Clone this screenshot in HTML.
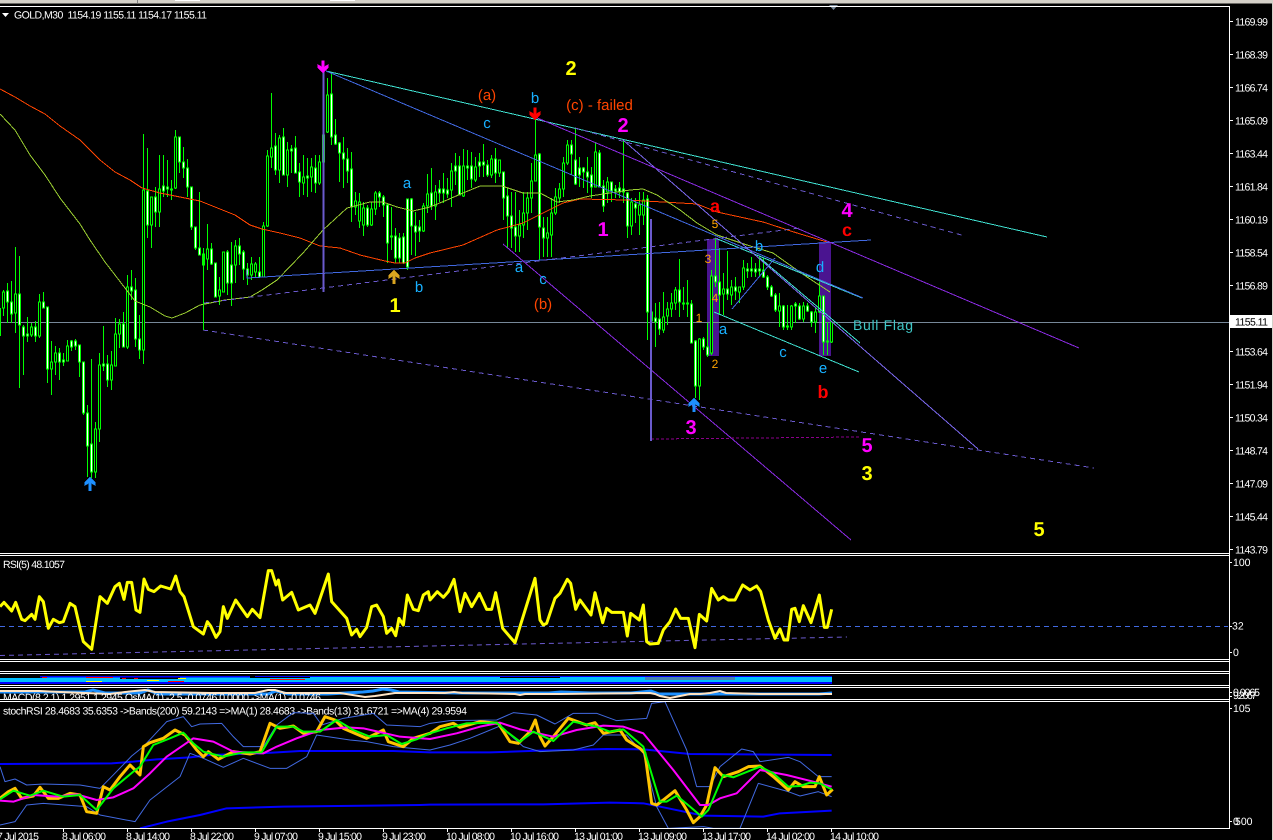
<!DOCTYPE html>
<html><head><meta charset="utf-8"><title>GOLD,M30</title>
<style>
html,body{margin:0;padding:0;background:#000;width:1273px;height:840px;overflow:hidden}
svg{display:block;position:absolute;left:0;top:0}
text{font-family:"Liberation Sans",sans-serif;text-rendering:geometricPrecision}
.t{font-size:10.500px;fill:#fff}
.ab{font-size:15px;fill:#18b0ff;text-anchor:middle}
.or{font-size:15px;fill:#ff4500;text-anchor:middle}
.sm{font-size:12px;fill:#ffa500;text-anchor:middle}
.big{font-size:20px;font-weight:bold;text-anchor:middle}
.re{font-size:18px;font-weight:bold;fill:#f00;text-anchor:middle}
.l{fill:none;vector-effect:non-scaling-stroke;stroke-linejoin:round}
</style></head><body>
<svg width="1273" height="840" viewBox="0 0 1273 840" xmlns="http://www.w3.org/2000/svg">
<defs><clipPath id="c6"><rect x="0" y="702" width="1229" height="126"/></clipPath><clipPath id="c5"><rect x="0" y="688" width="1229" height="11"/></clipPath></defs>
<rect width="1273" height="840" fill="#000"/>
<rect width="1273" height="3.5" fill="#d4d0c8"/><rect x="1272" width="1" height="840" fill="#d4d0c8"/>
<rect x="137" y="0" width="1" height="3" fill="#808080"/><rect x="175" width="25" height="1" fill="#fff"/><rect x="330" width="25" height="1" fill="#fff"/>
<!-- purple rectangles -->
<rect x="707" y="239" width="12" height="117" fill="#4a1490"/>
<rect x="819" y="242" width="12" height="114" fill="#4a1490"/>
<!-- price line -->
<path d="M0 322.5H1229" stroke="#778899" fill="none" shape-rendering="crispEdges"/>
<!-- candles -->
<g stroke="#0f0" shape-rendering="crispEdges">
<path fill="none" d="M.5 308V336M3.5 290V316M7.5 283V323M11.5 281V323M15.5 247V333M19.5 256V388M23.5 325V375M27.5 317V342M31.5 323V337M35.5 321V342M39.5 294V338M43.5 292V308M47.5 307V383M51.5 341V395M55.5 346V375M59.5 348V380M63.5 353V366M67.5 340V361M71.5 340V351M75.5 339V350M79.5 345V377M83.5 362V415M87.5 405V477M91.5 359V478M95.5 422V478M99.5 353V442M103.5 326V371M107.5 355V387M111.5 351V390M115.5 318V366M119.5 319V348M123.5 312V347M127.5 275V349M131.5 270V300M135.5 278V347M139.5 315V359M143.5 134V364M147.5 148V238M151.5 197V248M155.5 187V227M159.5 155V227M163.5 155V197M167.5 160V197M171.5 180V200M175.5 130V189M179.5 137V173M183.5 147V178M187.5 159V197M191.5 187V230M195.5 227V250M199.5 192V255M203.5 248V330M207.5 224V270M211.5 243V265M215.5 263V297M219.5 277V305M223.5 252V292M227.5 250V295M231.5 242V306M235.5 240V283M239.5 238V265M243.5 250V280M247.5 263V285M251.5 257V280M255.5 262V278M259.5 257V278M263.5 222V277M267.5 150V227M271.5 93V168M275.5 133V175M279.5 135V183M283.5 128V175M287.5 142V187M291.5 145V173M295.5 136V173M299.5 163V197M303.5 155V195M307.5 158V197M311.5 158V192M315.5 155V193M319.5 155V185M323.5 130V165M327.5 78V133M331.5 72V145M335.5 119V145M339.5 142V182M343.5 137V188M347.5 148V183M351.5 152V222M355.5 192V215M359.5 193V228M363.5 202V236M367.5 205V227M371.5 202V226M375.5 191V215M379.5 191V207M383.5 195V217M387.5 203V263M391.5 207V250M395.5 228V263M399.5 233V263M403.5 233V264M407.5 199V270M411.5 198V255M415.5 212V256M419.5 220V242M423.5 203V232M427.5 174V213M431.5 168V210M435.5 185V220M439.5 180V202M443.5 173V203M447.5 178V198M451.5 163V207M455.5 153V185M459.5 156V195M463.5 149V197M467.5 150V180M471.5 152V188M475.5 157V182M479.5 153V177M483.5 144V177M487.5 160V177M491.5 155V178M495.5 148V183M499.5 160V177M503.5 172V220M507.5 188V248M511.5 192V248M515.5 192V252M519.5 210V252M523.5 192V238M527.5 192V230M531.5 163V213M535.5 117V181M539.5 153V260M543.5 217V257M547.5 217V257M551.5 198V257M555.5 188V215M559.5 183V203M563.5 157V197M567.5 140V165M571.5 140V175M575.5 129V185M579.5 157V187M583.5 167V188M587.5 157V193M591.5 167V198M595.5 142V187M599.5 150V187M603.5 180V212M607.5 177V203M611.5 182V202M615.5 185V198M619.5 182V198M623.5 140V203M627.5 192V238M631.5 198V235M635.5 198V223M639.5 192V235M643.5 192V225M647.5 195V340M651.5 312V350M655.5 303V347M659.5 302V335M663.5 292V333M667.5 302V325M671.5 293V317M675.5 287V310M679.5 259V317M683.5 287V310M687.5 280V317M691.5 300V343M695.5 340V398M699.5 338V400M703.5 337V350M707.5 323V357M711.5 270V355M715.5 238V287M719.5 248V315M723.5 273V315M727.5 251V300M731.5 280V305M735.5 277V300M739.5 287V303M743.5 260V290M747.5 263V278M751.5 257V277M755.5 263V277M759.5 257V277M763.5 258V278M767.5 275V290M771.5 285V297M775.5 293V312M779.5 293V327M783.5 305V330M787.5 305V330M791.5 305V330M795.5 302V323M799.5 303V320M803.5 302V322M807.5 303V312M811.5 311V327M815.5 307V333M819.5 282V313M823.5 296V355M827.5 322V355M831.5 322V343"/>
<path fill="#fff" d="M6.5 291h2v11h-2zM10.5 302h2v12h-2zM18.5 294h2v31h-2zM22.5 327h2v9h-2zM26.5 334h2v2h-2zM34.5 327h2v9h-2zM42.5 302h2v6h-2zM46.5 307h2v62h-2zM58.5 353h2v9h-2zM62.5 360h2v2h-2zM70.5 341h2v6h-2zM74.5 341h2v5h-2zM78.5 345h2v17h-2zM82.5 362h2v51h-2zM86.5 413h2v33h-2zM90.5 444h2v28h-2zM102.5 364h2v2h-2zM106.5 364h2v16h-2zM122.5 324h2v23h-2zM130.5 287h2v4h-2zM134.5 290h2v49h-2zM138.5 339h2v11h-2zM146.5 191h2v34h-2zM154.5 197h2v15h-2zM162.5 186h2v5h-2zM166.5 187h2v2h-2zM170.5 189h2v1h-2zM178.5 137h2v25h-2zM182.5 162h2v6h-2zM186.5 168h2v19h-2zM190.5 187h2v40h-2zM194.5 227h2v21h-2zM198.5 248h2v7h-2zM202.5 254h2v11h-2zM210.5 249h2v15h-2zM214.5 263h2v34h-2zM226.5 252h2v31h-2zM230.5 265h2v18h-2zM238.5 246h2v8h-2zM242.5 252h2v17h-2zM246.5 269h2v6h-2zM258.5 272h2v5h-2zM274.5 146h2v24h-2zM282.5 137h2v38h-2zM290.5 149h2v2h-2zM294.5 148h2v25h-2zM298.5 172h2v10h-2zM306.5 176h2v2h-2zM314.5 168h2v15h-2zM330.5 94h2v43h-2zM334.5 135h2v9h-2zM338.5 143h2v10h-2zM342.5 153h2v6h-2zM346.5 159h2v12h-2zM350.5 169h2v38h-2zM366.5 208h2v17h-2zM378.5 193h2v4h-2zM382.5 197h2v8h-2zM386.5 205h2v38h-2zM390.5 236h2v1h-2zM394.5 236h2v22h-2zM398.5 238h2v20h-2zM402.5 237h2v26h-2zM406.5 199h2v68h-2zM410.5 199h2v27h-2zM414.5 226h2v6h-2zM418.5 227h2v4h-2zM430.5 193h2v13h-2zM438.5 189h2v4h-2zM442.5 189h2v4h-2zM446.5 190h2v4h-2zM454.5 166h2v5h-2zM458.5 166h2v29h-2zM466.5 166h2v2h-2zM470.5 166h2v13h-2zM478.5 162h2v4h-2zM482.5 162h2v3h-2zM486.5 165h2v10h-2zM494.5 159h2v14h-2zM502.5 172h2v26h-2zM506.5 196h2v20h-2zM510.5 216h2v12h-2zM514.5 227h2v9h-2zM538.5 154h2v73h-2zM542.5 228h2v10h-2zM570.5 145h2v9h-2zM574.5 160h2v24h-2zM578.5 168h2v7h-2zM582.5 168h2v4h-2zM586.5 172h2v5h-2zM590.5 175h2v12h-2zM598.5 153h2v34h-2zM602.5 186h2v20h-2zM610.5 182h2v9h-2zM614.5 189h2v2h-2zM618.5 188h2v4h-2zM622.5 189h2v3h-2zM626.5 193h2v33h-2zM634.5 204h2v4h-2zM646.5 199h2v113h-2zM650.5 312h2v9h-2zM654.5 318h2v4h-2zM658.5 319h2v10h-2zM678.5 290h2v12h-2zM682.5 303h2v1h-2zM686.5 303h2v1h-2zM690.5 304h2v39h-2zM694.5 341h2v45h-2zM702.5 339h2v8h-2zM706.5 347h2v8h-2zM714.5 276h2v6h-2zM718.5 282h2v13h-2zM726.5 289h2v5h-2zM734.5 287h2v4h-2zM746.5 269h2v2h-2zM750.5 269h2v2h-2zM754.5 269h2v3h-2zM758.5 269h2v2h-2zM762.5 270h2v7h-2zM766.5 277h2v10h-2zM770.5 287h2v9h-2zM774.5 295h2v15h-2zM782.5 306h2v21h-2zM786.5 326h2v1h-2zM794.5 304h2v2h-2zM798.5 306h2v13h-2zM806.5 306h2v5h-2zM810.5 312h2v10h-2zM822.5 296h2v46h-2zM826.5 341h2v1h-2z"/>
<path fill="#000" d="M2.5 292h2v16h-2zM14.5 294h2v19h-2zM30.5 327h2v8h-2zM38.5 302h2v34h-2zM50.5 362h2v7h-2zM54.5 353h2v9h-2zM66.5 346h2v15h-2zM94.5 429h2v43h-2zM98.5 365h2v64h-2zM110.5 365h2v15h-2zM114.5 334h2v32h-2zM118.5 324h2v10h-2zM126.5 287h2v60h-2zM142.5 190h2v160h-2zM150.5 197h2v28h-2zM158.5 189h2v23h-2zM174.5 137h2v51h-2zM206.5 249h2v10h-2zM218.5 290h2v6h-2zM222.5 252h2v40h-2zM234.5 246h2v19h-2zM250.5 264h2v11h-2zM254.5 264h2v8h-2zM262.5 226h2v51h-2zM266.5 156h2v70h-2zM270.5 148h2v9h-2zM278.5 138h2v32h-2zM286.5 150h2v25h-2zM302.5 177h2v6h-2zM310.5 167h2v10h-2zM318.5 162h2v21h-2zM322.5 135h2v27h-2zM326.5 95h2v37h-2zM354.5 201h2v6h-2zM358.5 202h2v19h-2zM362.5 208h2v17h-2zM370.5 209h2v16h-2zM374.5 193h2v16h-2zM422.5 206h2v25h-2zM426.5 194h2v12h-2zM434.5 192h2v14h-2zM450.5 171h2v19h-2zM462.5 166h2v30h-2zM474.5 167h2v13h-2zM490.5 159h2v16h-2zM498.5 160h2v13h-2zM518.5 225h2v11h-2zM522.5 213h2v12h-2zM526.5 198h2v15h-2zM530.5 181h2v17h-2zM534.5 155h2v26h-2zM546.5 233h2v5h-2zM550.5 213h2v22h-2zM554.5 197h2v16h-2zM558.5 189h2v9h-2zM562.5 163h2v26h-2zM566.5 145h2v18h-2zM594.5 152h2v35h-2zM606.5 182h2v10h-2zM630.5 202h2v24h-2zM638.5 205h2v10h-2zM642.5 200h2v15h-2zM662.5 317h2v13h-2zM666.5 309h2v7h-2zM670.5 303h2v6h-2zM674.5 290h2v13h-2zM698.5 339h2v47h-2zM710.5 276h2v77h-2zM722.5 289h2v5h-2zM730.5 287h2v8h-2zM738.5 287h2v5h-2zM742.5 268h2v19h-2zM778.5 306h2v5h-2zM790.5 306h2v21h-2zM802.5 306h2v13h-2zM814.5 312h2v10h-2zM818.5 296h2v16h-2zM830.5 322h2v20h-2z"/>
</g>
<!-- MAs -->
<g shape-rendering="crispEdges" fill="none">
<polyline stroke="#ff4500" points="0,89 15,97 30,106 45,114 60,126 80,140 100,160 115,172 130,180 142,188 160,193 180,197 200,201 215,207 235,215 250,225 262,229 280,233 300,238 320,246 340,248 360,255 385,261 395,263 405,263 415,258 430,253 463,245 497,230 523,223 543,213 563,203 580,199 627,200 663,202 697,204 717,212 763,222 797,233 827,242"/>
<polyline stroke="#9acd32" points="0,114 15,130 30,155 45,175 60,198 80,224 90,240 105,262 125,288 135,301 150,307 165,316 172,318 185,313 200,305 225,300 250,297 262,290 277,280 303,253 323,230 347,208 370,202 383,202 397,207 413,211 430,207 447,200 463,193 480,186 502,186 523,193 540,193 557,202 573,200 590,196 630,190 643,189 657,195 680,210 697,223 717,235 747,245 773,253 787,263 807,277 830,292"/>
<!-- trend lines -->
<path stroke="#40e0d0" d="M326 71L1047 237M714 312L859 372M715 238L862 298M760 258L860 343"/>
<path stroke="#4169e1" d="M326 71L863 298M247 270V278L871 240M732 309L775 258"/>
<path stroke="#7b68ee" d="M623 140L978 449"/>
<path stroke="#8a2be2" d="M535 117L1079 348M503 244L851 540"/>
<path stroke="#6a5acd" stroke-dasharray="5 4" d="M575 128L965 236M204 303L800 228M203 330L1094 468"/>
<path stroke="#0f0" d="M203.5 248V330"/>
<path stroke="#8b008b" stroke-dasharray="3 2" d="M651 439L860 437"/>
<path stroke="#6a5acd" stroke-width="2" d="M323.5 70V292M651 219V441"/>
</g>
<!-- arrows -->
<g shape-rendering="crispEdges">
<path fill="#f0f" d="M323 73l5.5-5v-4l-4 2.5v-6h-3v6l-4-2.5v4z"/>
<path fill="#f00" d="M535 120l5.5-5v-4l-4 2.5v-6h-3v6l-4-2.5v4z"/>
<path fill="#1e90ff" d="M90 477l5.5 5v4l-4-2.5v7.5h-3v-7.5l-4 2.5v-4z"/>
<path fill="#daa520" d="M394 270l5.5 5v4l-4-2.5v7.5h-3v-7.5l-4 2.5v-4z"/>
<path fill="#1e90ff" d="M694 398l5.5 5v4l-4-2.5v7.5h-3v-7.5l-4 2.5v-4z"/>
</g>
<!-- labels -->
<text x="571" y="75" class="big" fill="#ff0">2</text>
<text x="487" y="100" class="or">(a)</text>
<text x="599.500" y="110" class="or">(c) - failed</text>
<text x="535" y="103" class="ab">b</text>
<text x="487" y="128" class="ab">c</text>
<text x="407" y="188" class="ab">a</text>
<text x="419" y="292" class="ab">b</text>
<text x="395" y="312" class="big" fill="#ff0">1</text>
<text x="519" y="272" class="ab">a</text>
<text x="543" y="284" class="ab">c</text>
<text x="543" y="309" class="or">(b)</text>
<text x="603" y="236" class="big" fill="#f0f">1</text>
<text x="623" y="132" class="big" fill="#f0f">2</text>
<text x="715" y="212" class="re">a</text>
<text x="715" y="228" class="sm">5</text>
<text x="708" y="263" class="sm">3</text>
<text x="715" y="302" class="sm">4</text>
<text x="699" y="322" class="sm">1</text>
<text x="715" y="368" class="sm">2</text>
<text x="759" y="251" class="ab">b</text>
<text x="820" y="272" class="ab">d</text>
<text x="723" y="334" class="ab">a</text>
<text x="783" y="357" class="ab">c</text>
<text x="823" y="373" class="ab">e</text>
<text x="823" y="398" class="re">b</text>
<text x="847" y="217" class="big" fill="#f0f">4</text>
<text x="847" y="236" class="re">c</text>
<text x="691" y="434" class="big" fill="#f0f">3</text>
<text x="867" y="452" class="big" fill="#f0f">5</text>
<text x="867" y="480" class="big" fill="#ff0">3</text>
<text x="1039" y="536" class="big" fill="#ff0">5</text>
<text x="853" y="330" font-size="14" fill="#40c8c8" textLength="60">Bull Flag</text>
<!-- headers -->
<path d="M2 13h7l-3.500 4z" fill="#fff"/>
<text x="14" y="18.500" class="t" textLength="193">GOLD,M30&#160;&#160;1154.19 1155.11 1154.17 1155.11</text>
<path d="M829 5h9l-4.500 5z" fill="#778899"/>
<text x="3" y="568" class="t" textLength="62">RSI(5) 48.1057</text>
<!-- RSI -->
<path d="M0 626.500H1228" stroke="#4169e1" stroke-dasharray="5 4" fill="none" shape-rendering="crispEdges"/>
<path d="M0 655.500L430 646L847 637" stroke="#6a5acd" stroke-dasharray="5 4" fill="none"/>
<g transform="translate(0,550) scale(.33333)"><polyline class="l" stroke="#ff0" stroke-width="3" points="0,170 12,157 35,183 47,157 65,208 75,212 95,193 105,208 118,140 130,155 145,235 160,208 178,218 190,215 210,160 225,170 240,235 250,275 275,298 300,140 322,160 345,110 358,100 372,148 382,97 395,97 408,180 420,187 432,87 445,118 462,125 482,108 512,117 527,78 540,125 552,140 580,230 610,252 622,215 632,228 648,262 660,245 670,170 682,205 707,150 742,200 757,178 780,203 805,62 815,62 828,105 835,90 848,150 875,127 895,180 930,165 945,190 985,72 995,155 1040,205 1055,255 1070,238 1080,260 1100,232 1115,170 1130,165 1150,200 1160,250 1175,235 1187,257 1197,205 1210,225 1222,135 1240,178 1255,182 1270,135 1285,125 1290,150 1312,125 1330,142 1345,125 1362,88 1380,185 1395,130 1415,170 1438,130 1460,178 1475,178 1487,128 1508,235 1545,278 1605,85 1620,210 1630,225 1640,220 1665,145 1680,130 1702,88 1712,100 1727,178 1740,150 1773,195 1785,128 1808,218 1820,175 1835,187 1870,187 1882,258 1892,190 1918,210 1930,165 1940,275 1950,282 1975,280 1990,240 2010,215 2027,177 2042,205 2065,205 2085,293 2098,193 2120,213 2135,115 2155,150 2170,140 2185,150 2205,150 2228,105 2250,120 2270,108 2282,125 2305,210 2325,265 2340,237 2352,270 2363,270 2375,178 2385,175 2398,215 2410,167 2433,218 2458,135 2473,232 2482,232 2495,178"/></g>
<!-- panel 4 band -->
<g shape-rendering="crispEdges">
<rect x="0" y="682" width="832" height="2" fill="#00f"/>
<rect x="0" y="677" width="832" height="5" fill="#00bfff"/>
<path fill="#000" d="M0 677h45v1h-45zM120 677h60v2h-60zM250 677h60v1h-60zM500 677h60v1h-60zM650 677h60v1h-60z"/>
<rect x="40" y="676" width="210" height="1.500" fill="#00f"/>
<rect x="255" y="676" width="577" height="1" fill="#00f"/>
<path fill="#f00" d="M42 677h5v1h-5zM86 677h27v1h-27zM122 678h4v1h-4zM134 678h4v1h-4zM168 681h16v1h-16zM270 679h35v1h-35z"/>
<path fill="#ff0" d="M86 681h16v1h-16zM147 680h12v1h-12zM178 678h8v1h-8zM690 679h8v1h-8z"/>
<rect x="645" y="677" width="90" height="3" fill="#4682b4"/>
</g>
<!-- panel 5 -->
<g clip-path="url(#c5)">
<polyline fill="none" stroke="#1e90ff" stroke-width="3" points="0,692 85,692 93,690 105,693 140,693 148,690 158,694 268,694 276,691 288,694 328,694 363,692 373,691 383,689 391,690 399,692 459,693 549,693 561,692 591,693 631,693 651,691 659,694 819,694 832,693"/>
<polyline fill="none" stroke="#ffe4c4" stroke-width="2" points="0,691 40,691 60,692 85,693 110,694 125,692 145,690 155,692 210,693 255,693 268,690 275,690 285,693 340,693 365,697 375,696 395,693 445,693 454,692 462,693 515,694 520,695 525,694 560,694 650,693 655,694 660,696 670,698 680,696 690,694 700,694 710,693 720,691 726,693 760,694 832,694"/>
<text x="3" y="701" class="t" textLength="318">MACD(8,2,1) 1.2951 1.2945  OsMA(1) -2.5 -0.0746 0.0000  ->MA(1) -0.0746</text>
</g>
<!-- stoch -->
<text x="3" y="714.500" class="t" textLength="464">stochRSI 28.4683 35.6353  ->Bands(200) 59.2143  =>MA(1) 28.4683  ->Bands(13) 31.6721  =>MA(4) 29.9594</text>
<g clip-path="url(#c6)"><g transform="translate(0,550) scale(.33333)">
<polyline class="l" stroke="#00f" stroke-width="2" points="0,642 335,640 400,635 470,628 570,622 630,615 780,610 900,603 1180,603 1290,607 1470,607 1620,602 1820,597 1930,598 2070,612 2495,615"/>
<polyline class="l" stroke="#00f" stroke-width="2" points="420,835 500,815 600,795 680,775 850,770 1260,765 1290,764 1630,763 1830,758 1930,760 1990,772 2110,797 2290,800 2340,790 2495,782"/>
<polyline class="l" stroke="#4169e1" stroke-width="1" points="0,650 15,695 45,687 80,705 130,702 240,705 300,715 330,685 395,618 430,590 500,515 550,500 575,530 600,522 665,520 700,560 730,590 790,590 830,525 880,488 940,490 965,525 1030,505 1120,490 1160,525 1260,530 1290,520 1350,512 1490,510 1540,488 1610,495 1665,522 1720,490 1790,490 1850,512 1940,505 1955,460 1995,455 2060,600 2090,710 2130,710 2160,650 2225,597 2260,605 2280,635 2365,622 2400,635 2455,680 2495,680"/>
<polyline class="l" stroke="#4169e1" stroke-width="1" points="0,825 45,815 80,765 130,760 260,770 300,795 405,815 450,750 540,680 570,610 610,625 670,652 730,625 810,655 860,655 920,620 950,555 1050,570 1100,575 1180,590 1290,600 1350,585 1410,565 1500,528 1570,590 1620,605 1720,600 1780,585 1810,555 1880,555 1930,610 1970,770 2005,835 2110,830 2140,835 2220,835 2275,700 2365,725 2400,738 2455,725 2495,740"/>
<polyline class="l" stroke="#ffc400" stroke-width="3" points="0,745 25,725 45,715 65,745 100,738 120,712 145,745 175,745 210,730 240,735 260,785 290,790 310,710 330,720 360,680 390,645 420,675 430,590 450,578 490,565 525,540 555,555 590,600 610,620 625,605 655,628 700,605 750,612 780,605 810,520 840,535 880,528 910,550 950,545 975,500 1005,510 1030,535 1100,565 1150,540 1165,575 1210,590 1240,565 1290,550 1320,530 1360,520 1380,532 1440,515 1495,520 1530,575 1555,580 1590,545 1606,510 1620,560 1635,588 1660,560 1705,505 1760,525 1785,518 1810,550 1860,540 1880,570 1920,595 1935,610 1955,760 1970,765 1990,750 2025,722 2060,780 2080,818 2100,800 2120,765 2145,653 2170,680 2215,665 2245,650 2280,648 2320,680 2365,720 2385,695 2410,710 2445,710 2458,680 2480,735 2498,718"/>
<polyline class="l" stroke="#f0f" stroke-width="2" points="0,752 40,755 100,735 170,740 230,733 290,750 340,742 400,715 450,670 500,620 580,565 640,575 700,605 790,610 830,590 890,565 960,540 1040,532 1090,535 1200,560 1290,567 1370,550 1440,530 1500,518 1560,538 1660,560 1730,540 1810,527 1870,530 1930,550 2020,660 2100,765 2125,765 2160,745 2210,730 2280,660 2360,675 2440,695 2495,710"/>
<polyline class="l" stroke="#0f0" stroke-width="2" points="0,748 40,722 90,737 130,722 190,740 240,735 290,780 340,715 400,665 420,650 460,585 510,565 550,548 580,580 610,605 670,620 730,607 785,607 830,530 880,530 910,545 960,545 1010,510 1060,540 1110,560 1160,555 1205,582 1250,568 1290,550 1340,535 1400,520 1490,518 1520,545 1560,575 1600,545 1660,573 1720,515 1790,530 1830,545 1870,538 1930,590 1980,755 2000,755 2030,737 2070,770 2105,800 2125,780 2170,675 2200,682 2280,650 2320,670 2365,710 2400,708 2430,698 2460,700 2495,718"/>
</g></g>
<!-- panel borders -->
<path fill="none" stroke="#fff" shape-rendering="crispEdges" d="M0 6.500H1229.500V828.500H0M0 553.500H1229.500M0 555.500H1229.500M0 659.500H1229.500M0 661.500H1229.500M0 671.500H1229.500M0 673.500H1229.500M0 685.500H1229.500M0 687.500H1229.500M0 699.500H1229.500M0 701.500H1229.500"/>
<!-- right axis -->
<path fill="none" stroke="#fff" shape-rendering="crispEdges" d="M1230 21.500h3M1230 54.500h3M1230 87.500h3M1230 120.500h3M1230 153.500h3M1230 186.500h3M1230 219.500h3M1230 252.500h3M1230 285.500h3M1230 351.500h3M1230 384.500h3M1230 417.500h3M1230 450.500h3M1230 483.500h3M1230 516.500h3M1230 549.500h3M1230 562.500h2M1230 626.500h2M1230 652.500h2M1230 692.500h2M1230 696.500h2M1230 708.500h2M1230 821.500h2"/>
<g>
<text class="t" x="1235" y="25.500" textLength="33">1169.99</text>
<text class="t" x="1235" y="58.500" textLength="33">1168.39</text>
<text class="t" x="1235" y="91.500" textLength="33">1166.74</text>
<text class="t" x="1235" y="124.500" textLength="33">1165.09</text>
<text class="t" x="1235" y="157.500" textLength="33">1163.44</text>
<text class="t" x="1235" y="190.500" textLength="33">1161.84</text>
<text class="t" x="1235" y="223.500" textLength="33">1160.19</text>
<text class="t" x="1235" y="256.500" textLength="33">1158.54</text>
<text class="t" x="1235" y="289.500" textLength="33">1156.89</text>
<text class="t" x="1235" y="355.500" textLength="33">1153.64</text>
<text class="t" x="1235" y="388.500" textLength="33">1151.94</text>
<text class="t" x="1235" y="421.500" textLength="33">1150.34</text>
<text class="t" x="1235" y="454.500" textLength="33">1148.74</text>
<text class="t" x="1235" y="487.500" textLength="33">1147.09</text>
<text class="t" x="1235" y="520.500" textLength="33">1145.44</text>
<text class="t" x="1235" y="553.500" textLength="33">1143.79</text>
<text class="t" x="1233" y="566">100</text>
<text class="t" x="1232" y="629.500">32</text>
<text class="t" x="1233" y="656">0</text>
<text class="t" x="1233" y="696" textLength="27">0.0065</text>
<text class="t" x="1233" y="699" textLength="24">9.2067</text>
<text class="t" x="1233" y="712">105</text>
<text class="t" x="1233" y="825">0</text>
<text class="t" x="1235" y="825">500</text>
</g>
<rect x="1230" y="315" width="42" height="13" fill="#fff"/>
<text x="1235" y="325.500" font-size="10.500" fill="#000" textLength="33">1155.11</text>
<!-- bottom axis -->
<path fill="none" stroke="#fff" shape-rendering="crispEdges" d="M63.500 829v3M127.500 829v3M191.500 829v3M255.500 829v3M319.500 829v3M383.500 829v3M447.500 829v3M511.500 829v3M575.500 829v3M639.500 829v3M703.500 829v3M767.500 829v3M831.500 829v3"/>
<text class="t" x="-3" y="840" textLength="42">7 Jul 2015</text>
<text class="t" x="62" y="840" textLength="44">8 Jul 06:00</text>
<text class="t" x="126" y="840" textLength="44">8 Jul 14:00</text>
<text class="t" x="190" y="840" textLength="44">8 Jul 22:00</text>
<text class="t" x="254" y="840" textLength="44">9 Jul 07:00</text>
<text class="t" x="318" y="840" textLength="44">9 Jul 15:00</text>
<text class="t" x="382" y="840" textLength="44">9 Jul 23:00</text>
<text class="t" x="446" y="840" textLength="49">10 Jul 08:00</text>
<text class="t" x="510" y="840" textLength="49">10 Jul 16:00</text>
<text class="t" x="574" y="840" textLength="49">13 Jul 01:00</text>
<text class="t" x="638" y="840" textLength="49">13 Jul 09:00</text>
<text class="t" x="702" y="840" textLength="49">13 Jul 17:00</text>
<text class="t" x="766" y="840" textLength="49">14 Jul 02:00</text>
<text class="t" x="830" y="840" textLength="49">14 Jul 10:00</text>
</svg>
</body></html>
